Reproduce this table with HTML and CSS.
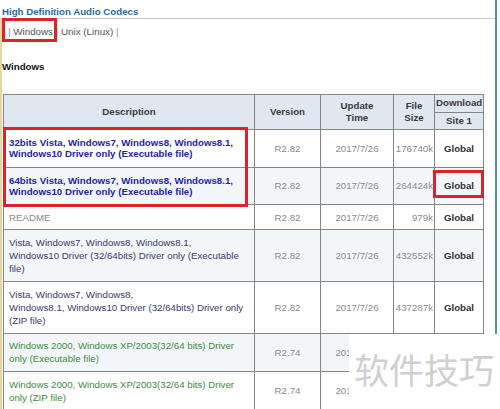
FILE: index.html
```html
<!DOCTYPE html>
<html>
<head>
<meta charset="utf-8">
<link rel="stylesheet" href="styles.css">
</head>
<body>
<div class="page">
  <div class="main">
    <h2 class="title">High Definition Audio Codecs</h2>
    <div class="content">
      <p class="tabs"><span class="bar">|</span> Windows <span class="bar">|</span> Unix (Linux) <span class="bar">|</span></p>
      <h3 class="section">Windows</h3>
      <table class="dl">
        <colgroup>
          <col class="c-desc"><col class="c-ver"><col class="c-date"><col class="c-size"><col class="c-site">
        </colgroup>
        <thead>
          <tr>
            <th rowspan="2">Description</th>
            <th rowspan="2">Version</th>
            <th rowspan="2">Update<br>Time</th>
            <th rowspan="2">File<br>Size</th>
            <th class="th-small">Download</th>
          </tr>
          <tr>
            <th class="th-small">Site 1</th>
          </tr>
        </thead>
        <tbody>
          <tr>
            <td class="desc blue">32bits Vista, Windows7, Windows8, Windows8.1,<br>Windows10 Driver only (Executable file)</td>
            <td class="mid">R2.82</td><td class="mid">2017/7/26</td><td class="size">176740k</td><td class="site">Global</td>
          </tr>
          <tr class="alt">
            <td class="desc blue">64bits Vista, Windows7, Windows8, Windows8.1,<br>Windows10 Driver only (Executable file)</td>
            <td class="mid">R2.82</td><td class="mid">2017/7/26</td><td class="size">264424k</td><td class="site">Global</td>
          </tr>
          <tr>
            <td class="desc grey">README</td>
            <td class="mid">R2.82</td><td class="mid">2017/7/26</td><td class="size">979k</td><td class="site">Global</td>
          </tr>
          <tr class="alt">
            <td class="desc navy">Vista, Windows7, Windows8, Windows8.1,<br>Windows10 Driver (32/64bits) Driver only (Executable<br>file)</td>
            <td class="mid">R2.82</td><td class="mid">2017/7/26</td><td class="size">432552k</td><td class="site">Global</td>
          </tr>
          <tr>
            <td class="desc navy">Vista, Windows7, Windows8,<br>Windows8.1, Windows10 Driver (32/64bits) Driver only<br>(ZIP file)</td>
            <td class="mid">R2.82</td><td class="mid">2017/7/26</td><td class="size">437287k</td><td class="site">Global</td>
          </tr>
          <tr class="alt">
            <td class="desc green">Windows 2000, Windows XP/2003(32/64 bits) Driver<br>only (Executable file)</td>
            <td class="mid">R2.74</td><td class="mid">2017/7/26</td><td class="size"></td><td class="site"></td>
          </tr>
          <tr>
            <td class="desc green">Windows 2000, Windows XP/2003(32/64 bits) Driver<br>only (ZIP file)</td>
            <td class="mid">R2.74</td><td class="mid">2017/7/26</td><td class="size"></td><td class="site"></td>
          </tr>
        </tbody>
      </table>
    </div>
  </div>
  <div class="rail"></div>

  <div class="mark mark-tab"></div>
  <div class="mark mark-rows"></div>
  <div class="mark mark-global"></div>
  <div class="watermark">软件技巧</div>
</div>
</body>
</html>
```
FILE: styles.css
```css
html, body {
  margin: 0;
  padding: 0;
  background: #fff;
}
body {
  font-family: "Liberation Sans", Arial, sans-serif;
  font-size: 9.7px;
  color: #333;
}
.page {
  position: relative;
  width: 500px;
  height: 409px;
  overflow: hidden;
  display: flex;
  background: #fff;
}
.main {
  width: 495px;
  flex: none;
}
.rail {
  width: 2px;
  flex: none;
  background: #4a98a8;
}
.title {
  margin: 0;
  padding: 5px 0 0 2px;
  height: 13px;
  line-height: 13px;
  font-size: 9.7px;
  font-weight: bold;
  color: #1f6c9b;
  border-bottom: 1px solid #c9c9c9;
}
.content {
  border-left: 2px solid #ecd3a2;
  padding-left: 1px;
  height: 390px;
}
.tabs {
  margin: 0;
  padding-top: 5.5px;
  padding-left: 5px;
  line-height: 13px;
  font-size: 9.8px;
  color: #555;
}
.tabs .bar {
  color: #7e91d8;
}
.section {
  margin: 22.5px 0 0 -1px;
  line-height: 13px;
  font-size: 9.7px;
  font-weight: bold;
  color: #111;
}
.dl {
  margin-top: 21px;
  border-collapse: collapse;
  table-layout: fixed;
  width: 481px;
  font-size: 9.7px;
}
.c-desc { width: 251px; }
.c-ver { width: 66px; }
.c-date { width: 73px; }
.c-size { width: 41px; }
.c-site { width: 49px; }
.dl th, .dl td {
  border: 1px solid #858585;
}
.dl th {
  background: #dfe8f1;
  color: #3a3a3a;
  font-weight: bold;
  line-height: 12px;
  padding: 2px 1px;
  text-align: center;
  vertical-align: middle;
}
.dl th.th-small {
  height: 12.5px;
}
.dl td {
  line-height: 13.2px;
  padding: 5.5px 1px 5.5px 1px;
  vertical-align: middle;
  color: #8a8a8a;
  white-space: nowrap;
}
.dl tr.alt td {
  background: #f3f6f9;
}
.dl td.desc {
  padding-left: 5px;
  padding-right: 4px;
  text-align: left;
}
.dl td.blue {
  color: #2323a6;
  font-weight: bold;
  line-height: 11.3px;
  padding-top: 7px;
  padding-bottom: 7px;
}
.dl td.grey { color: #8a8a8a; }
.dl td.navy { color: #3a3a6c; }
.dl td.green { color: #3b8c3b; }
.dl td.mid { text-align: center; }
.dl td.size { text-align: right; padding-right: 1px; }
.dl td.site {
  text-align: center;
  font-weight: bold;
  color: #333;
}
.mark {
  position: absolute;
  border: 3px solid #d9232d;
  box-sizing: border-box;
}
.mark-tab { left: 2px; top: 18px; width: 55px; height: 24px; }
.mark-rows { left: 3px; top: 127px; width: 245px; height: 80px; }
.mark-global { left: 433px; top: 170px; width: 51px; height: 28px; }
.watermark {
  position: absolute;
  left: 349px;
  top: 334px;
  width: 151px;
  height: 75px;
  background: #fff;
  box-sizing: border-box;
  padding-left: 5px;
  padding-top: 13px;
  font-family: "Noto Sans CJK SC", sans-serif;
  font-size: 35px;
  line-height: 44px;
  color: #d0d0d0;
  white-space: nowrap;
}
```
